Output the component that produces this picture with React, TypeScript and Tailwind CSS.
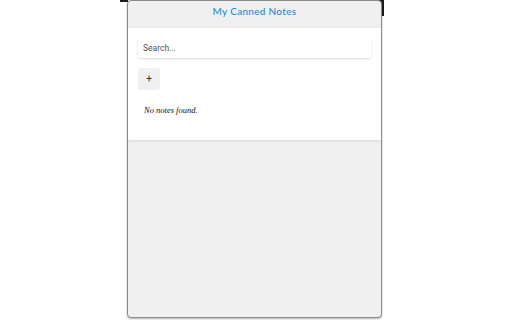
export default function App() {
  return (
    <div className="w-[512px] h-[320px] bg-white relative">
      <div className="absolute left-[120px] top-0 w-[8px] h-[2px] bg-[#1b1b22]" />
      <div className="absolute left-[378px] top-0 w-[6px] h-[16px] bg-[#1b1b22]" />
      <div className="absolute left-[127px] top-0 w-[255px] h-[318px] flex flex-col bg-[#f0f0f0] border border-[#8a8a8a] rounded-[4px] shadow-[0_1px_2px_rgba(0,0,0,0.3)] overflow-hidden">
        <div className="h-[27px] shrink-0 flex items-start justify-center pt-[4px]">
          <span className="text-[10px] leading-[12px] text-[#1e8de0] font-['Lato',sans-serif] font-medium tracking-[0.3px]">
            My Canned Notes
          </span>
        </div>
        <div className="bg-white px-[10px] pt-[10px] pb-[24px] flex flex-col items-start shadow-[0_1px_3px_rgba(0,0,0,0.12)]">
          <input
            placeholder="Search..."
            className="block w-full h-[20px] px-[5px] text-[8.5px] leading-[20px] font-['Roboto',sans-serif] text-[#444] placeholder-[#555] bg-white rounded-[2px] shadow-[0_1px_2px_rgba(0,0,0,0.15)] outline-none"
          />
          <button className="mt-[10px] w-[22px] h-[22px] flex items-center justify-center bg-[#f0f0f0] rounded-[3px] text-[10px] leading-none text-[#333] font-['Roboto',sans-serif]">
            +
          </button>
          <p className="mt-[14px] ml-[6px] text-[8.5px] leading-[12px] italic text-[#111] font-['Liberation_Serif',serif]">
            No notes found.
          </p>
        </div>
      </div>
    </div>
  );
}
